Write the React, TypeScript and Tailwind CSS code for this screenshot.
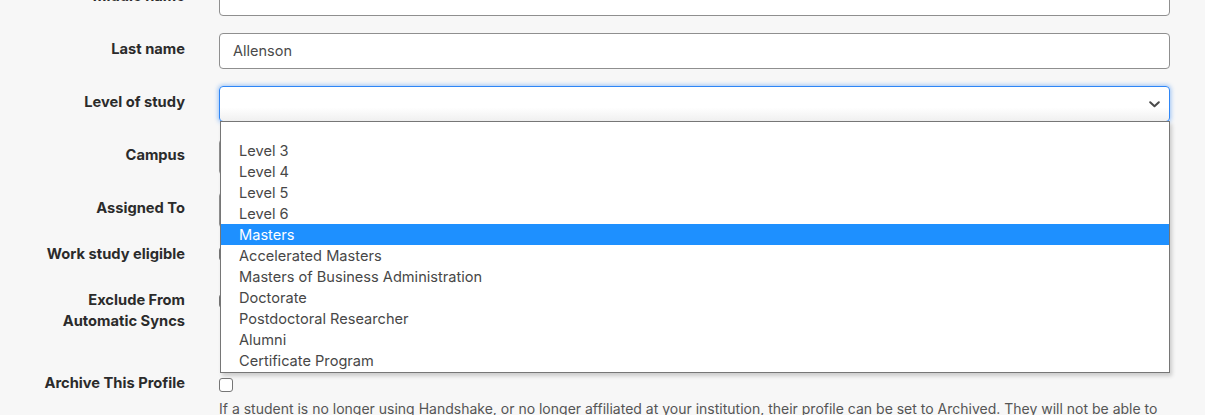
import React from "react";

const options = [
  "",
  "Level 3",
  "Level 4",
  "Level 5",
  "Level 6",
  "Masters",
  "Accelerated Masters",
  "Masters of Business Administration",
  "Doctorate",
  "Postdoctoral Researcher",
  "Alumni",
  "Certificate Program",
];

function Label({ children, className = "" }: { children: React.ReactNode; className?: string }) {
  return (
    <div
      className={
        "w-[185px] shrink-0 text-right text-[14.7px] font-bold leading-[21px] text-[#2b2b2b] " + className
      }
    >
      {children}
    </div>
  );
}

function TextInput({ value = "" }: { value?: string }) {
  return (
    <div className="flex h-[36px] flex-1 items-center rounded-[4px] border border-[#8f8f8f] bg-white pl-[13px] text-[14.5px] text-[#4a4a4a]">
      {value}
    </div>
  );
}

function Checkbox() {
  return <div className="h-[14px] w-[14px] shrink-0 rounded-[3px] border border-[#767676] bg-white" />;
}

export default function App() {
  return (
    <div
      className="h-[415px] w-[1205px] overflow-hidden bg-[#f7f7f7]"
      style={{ fontFamily: "Inter, 'Noto Sans', sans-serif" }}
    >
      <div className="mt-[-20px] flex flex-col pr-[35px]">
        {/* Middle name */}
        <div className="flex items-center gap-[34px]">
          <Label className="pb-[3px]">Middle name</Label>
          <TextInput />
        </div>
        {/* Last name */}
        <div className="mt-[17px] flex items-center gap-[34px]">
          <Label className="pb-[3px]">Last name</Label>
          <TextInput value="Allenson" />
        </div>
        {/* Level of study */}
        <div className="relative z-10 mt-[17px] flex items-center gap-[34px]">
          <Label className="pb-[3px]">Level of study</Label>
          <div className="relative flex-1">
            <div className="flex h-[36px] items-center justify-end rounded-[4px] border border-[#2f86f6] bg-gradient-to-b from-white from-60% to-[#f0f0f0] pr-[9px] shadow-[0_0_4px_1px_rgba(47,134,246,0.45)]">
              <svg width="11" height="7" viewBox="0 0 11 7" fill="none">
                <path d="M1.2 1.2 L5.5 5.3 L9.8 1.2" stroke="#4a4a4a" strokeWidth="2" strokeLinecap="round" strokeLinejoin="round" />
              </svg>
            </div>
            <div className="absolute left-[1px] right-0 top-[35px] border border-[#767676] bg-white shadow-[2px_3px_4px_rgba(0,0,0,0.18)]">
              {options.map((o, i) => (
                <div
                  key={i}
                  className={
                    (i === 0 ? "h-[18px] " : "h-[21px] pt-[1px] ") +
                    "pl-[18px] text-[14.6px] leading-[20px] " +
                    (o === "Masters" ? "bg-[#1e90ff] text-white" : "text-[#474747]")
                  }
                >
                  {o}
                </div>
              ))}
              <div className="h-[1px]" />
            </div>
          </div>
        </div>
        {/* Campus */}
        <div className="mt-[17px] flex items-center gap-[34px]">
          <Label className="pb-[3px]">Campus</Label>
          <TextInput />
        </div>
        {/* Assigned To */}
        <div className="mt-[17px] flex items-center gap-[34px]">
          <Label className="pb-[3px]">Assigned To</Label>
          <TextInput />
        </div>
        {/* Work study eligible */}
        <div className="mt-[16px] flex items-start gap-[34px]">
          <Label>Work study eligible</Label>
          <div className="pt-[3px]">
            <Checkbox />
          </div>
        </div>
        {/* Exclude */}
        <div className="mt-[25px] flex items-start gap-[34px]">
          <Label>
            Exclude From
            <br />
            Automatic Syncs
          </Label>
          <div className="pt-[4px]">
            <Checkbox />
          </div>
        </div>
        {/* Archive */}
        <div className="mt-[41px] flex items-start gap-[34px]">
          <Label>Archive This Profile</Label>
          <div className="flex flex-1 flex-col">
            <div className="pt-[5px]">
              <Checkbox />
            </div>
            <div className="mt-[6px] text-[14px] leading-[21px] text-[#555555]">
              If a student is no longer using Handshake, or no longer affiliated at your institution, their profile can
              be set to Archived. They will not be able to log in or be visible to employers.
            </div>
          </div>
        </div>
      </div>
    </div>
  );
}
